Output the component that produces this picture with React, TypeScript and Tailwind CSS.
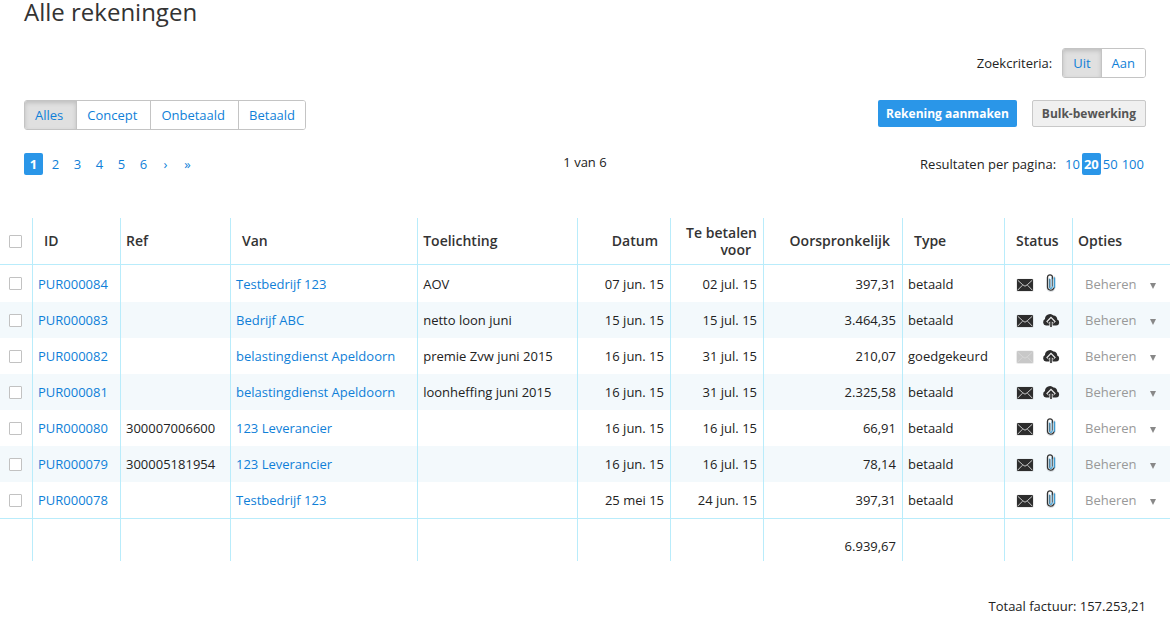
import React, { useState } from 'react';

type Attachment = 'clip' | 'upload';

interface Invoice {
  id: string;
  ref: string;
  from: string;
  note: string;
  date: string;
  due: string;
  amount: string;
  type: string;
  mailed: boolean;
  attachment: Attachment;
}

const filters = ['Alles', 'Concept', 'Onbetaald', 'Betaald'];
const searchModes = ['Uit', 'Aan'];
const pages = ['1', '2', '3', '4', '5', '6', '›', '»'];
const pageSizes = ['10', '20', '50', '100'];

const invoices: Invoice[] = [
  { id: 'PUR000084', ref: '', from: 'Testbedrijf 123', note: 'AOV', date: '07 jun. 15', due: '02 jul. 15', amount: '397,31', type: 'betaald', mailed: true, attachment: 'clip' },
  { id: 'PUR000083', ref: '', from: 'Bedrijf ABC', note: 'netto loon juni', date: '15 jun. 15', due: '15 jul. 15', amount: '3.464,35', type: 'betaald', mailed: true, attachment: 'upload' },
  { id: 'PUR000082', ref: '', from: 'belastingdienst Apeldoorn', note: 'premie Zvw juni 2015', date: '16 jun. 15', due: '31 jul. 15', amount: '210,07', type: 'goedgekeurd', mailed: false, attachment: 'upload' },
  { id: 'PUR000081', ref: '', from: 'belastingdienst Apeldoorn', note: 'loonheffing juni 2015', date: '16 jun. 15', due: '31 jul. 15', amount: '2.325,58', type: 'betaald', mailed: true, attachment: 'upload' },
  { id: 'PUR000080', ref: '300007006600', from: '123 Leverancier', note: '', date: '16 jun. 15', due: '16 jul. 15', amount: '66,91', type: 'betaald', mailed: true, attachment: 'clip' },
  { id: 'PUR000079', ref: '300005181954', from: '123 Leverancier', note: '', date: '16 jun. 15', due: '16 jul. 15', amount: '78,14', type: 'betaald', mailed: true, attachment: 'clip' },
  { id: 'PUR000078', ref: '', from: 'Testbedrijf 123', note: '', date: '25 mei 15', due: '24 jun. 15', amount: '397,31', type: 'betaald', mailed: true, attachment: 'clip' },
];

const MailIcon = ({ sent }: { sent: boolean }) => (
  <svg width="20" height="16" viewBox="0 -1 20 16" className={sent ? 'text-[#2d2d2d]' : 'text-[#c8c8c8]'} aria-hidden="true">
    <rect x="1" y="1.5" width="18" height="13.500" rx="2" fill="#000" opacity="0.08" />
    <rect x="2" y="2" width="16" height="12" rx="1" fill="currentColor" />
    <path d="M2.800 3.300l5 4.500L10 9.200l2.200-1.400 5-4.500M2.800 13l4.700-4.800M17.200 13l-4.700-4.800" fill="none" stroke="#d8d8d8" strokeWidth="0.9" />
  </svg>
);

const ClipIcon = () => (
  <svg width="12" height="20" viewBox="0 1 12 20" fill="none" strokeLinecap="round" aria-hidden="true">
    <path d="M2.500 5v9.500a3.300 3.300 0 0 0 6.600 0V4.500" stroke="#c9cfd3" strokeWidth="2.600" opacity="0.6" />
    <path d="M4.500 6v8a1.300 1.300 0 0 0 2.600 0V4.500" stroke="#3d9bd0" strokeWidth="1.200" />
    <path d="M9.500 5v9.500" stroke="#3d9bd0" strokeWidth="1.400" />
    <path d="M7.500 6V4.300a2.500 2.500 0 0 0-5 0v10a3.300 3.300 0 0 0 6.400 0.700" stroke="#333" strokeWidth="1.200" />
    <path d="M7.500 6v7M5 6.500v7.500" stroke="#666" strokeWidth="0.900" />
  </svg>
);

const UploadIcon = () => (
  <svg width="18" height="16" viewBox="0 -0.500 18 16" aria-hidden="true">
    <path d="M4 13A3.400 3.400 0 0 1 3 6.600 5 5 0 0 1 11.500 3a3.600 3.600 0 0 1 3.700 4 3.100 3.100 0 0 1-1 6z" fill="#2d2d2d" />
    <path d="M9 15V6.500M5.300 10L9 6.200l3.700 3.800" fill="none" stroke="#eee" strokeWidth="3.200" />
    <path d="M9 14.500V7M6 10L9 7l3 3" fill="none" stroke="#2d2d2d" strokeWidth="1.600" />
  </svg>
);

interface ButtonGroupProps {
  items: string[];
  active: string;
  buttonClass: string;
  onSelect: (item: string) => void;
}

const ButtonGroup: React.FC<ButtonGroupProps> = ({ items, active, buttonClass, onSelect }) => (
  <div className="flex h-[30px] divide-x divide-[#c4c4c4] overflow-hidden rounded-[3px] border border-[#c4c4c4]">
    {items.map(item => (
      <button
        key={item}
        type="button"
        onClick={() => onSelect(item)}
        className={`${buttonClass} text-[#0f7fd8] ${item === active ? 'bg-[#e0e0e0] shadow-[inset_0_2px_4px_rgba(0,0,0,0.15)]' : 'bg-white'}`}
      >
        {item}
      </button>
    ))}
  </div>
);

const checkboxClass = 'ml-[9px] block size-[13px] appearance-none rounded-[1px] border border-[#c2c2c2] bg-white checked:bg-[#2a96e8]';
const head = 'border-r border-b border-[#b9ecfb] font-semibold';
const cell = 'border-r border-[#b9ecfb] pl-[5px]';
const numberCell = 'border-r border-[#b9ecfb] pr-[6px] text-right';

const App: React.FC = () => {
  const [filter, setFilter] = useState('Alles');
  const [searchMode, setSearchMode] = useState('Uit');
  const [page, setPage] = useState('1');
  const [pageSize, setPageSize] = useState('20');
  const [selected, setSelected] = useState<string[]>([]);

  const toggle = (id: string) => {
    setSelected(prev => (prev.includes(id) ? prev.filter(s => s !== id) : [...prev, id]));
  };

  return (
    <main className="bg-white font-['Open_Sans',sans-serif] text-[13px] leading-[18px] text-[#222]">
      <div className="px-6">
        <h1 className="h-12 text-2xl leading-6 text-[#333]">Alle rekeningen</h1>

        <div className="flex items-center justify-end gap-[10px]">
          <span>Zoekcriteria:</span>
          <ButtonGroup items={searchModes} active={searchMode} buttonClass="px-[10px]" onSelect={setSearchMode} />
        </div>

        <div className="mt-[22px] flex items-start justify-between">
          <ButtonGroup items={filters} active={filter} buttonClass="pr-[13px] pl-[10px] last:pr-[10px]" onSelect={setFilter} />
          <div className="flex gap-[15px] text-xs font-bold">
            <button type="button" className="h-[27px] rounded-[2px] bg-[#2a96e8] px-2 text-white">Rekening aanmaken</button>
            <button type="button" className="h-[27px] rounded-[2px] border border-[#c8c8c8] bg-[#f0f0f0] px-[9px] text-[#555]">Bulk-bewerking</button>
          </div>
        </div>

        <div className="mt-[23px] grid grid-cols-3 items-center">
          <nav className="flex gap-[3px]">
            {pages.map(p => (
              <a
                key={p}
                href="#"
                onClick={() => setPage(p)}
                className={`w-[19px] rounded-[2px] py-[2px] text-center ${p === page ? 'bg-[#2a96e8] font-bold text-white' : 'text-[#0f7fd8]'}`}
              >
                {p}
              </a>
            ))}
          </nav>
          <span className="pb-1 text-center">1 van 6</span>
          <div className="flex items-center justify-end">
            <span className="mr-[7px]">Resultaten per pagina:</span>
            {pageSizes.map(size => (
              <a
                key={size}
                href="#"
                onClick={() => setPageSize(size)}
                className={`rounded-[2px] px-[2px] py-[2px] ${size === pageSize ? 'bg-[#2a96e8] font-bold text-white' : 'text-[#0f7fd8]'}`}
              >
                {size}
              </a>
            ))}
          </div>
        </div>
      </div>

      <table className="mt-[43px] w-full table-fixed border-separate border-spacing-0">
        <colgroup>
          <col className="w-[33px]" />
          <col className="w-[88px]" />
          <col className="w-[110px]" />
          <col className="w-[16%]" />
          <col />
          <col className="w-[93px]" />
          <col className="w-[93px]" />
          <col className="w-[139px]" />
          <col className="w-[102px]" />
          <col className="w-[68px]" />
          <col className="w-[97px]" />
        </colgroup>
        <thead>
          <tr className="h-[47px] text-left text-sm leading-[17px] text-[#333]">
            <th className={head}>
              <input type="checkbox" aria-label="Alles selecteren" className={checkboxClass} />
            </th>
            <th className={`${head} pb-[2px] pl-[11px]`}>ID</th>
            <th className={`${head} pb-[2px] pl-[5px]`}>Ref</th>
            <th className={`${head} pb-[2px] pl-[11px]`}>Van</th>
            <th className={`${head} pb-[2px] pl-[5px]`}>Toelichting</th>
            <th className={`${head} pr-3 pb-[2px] text-right`}>Datum</th>
            <th className={`${head} pr-[6px] text-right`}>
              Te betalen <span className="pr-[6px]">voor</span>
            </th>
            <th className={`${head} pr-3 pb-[2px] text-right`}>Oorspronkelijk</th>
            <th className={`${head} pb-[2px] pl-[11px]`}>Type</th>
            <th className={`${head} pb-[2px] pl-[11px]`}>Status</th>
            <th className="border-b border-[#b9ecfb] pb-[2px] pl-[5px] font-semibold">Opties</th>
          </tr>
        </thead>
        <tbody>
          {invoices.map(inv => (
            <tr key={inv.id} className="h-9 first:h-[37px] even:bg-[#f3f9fc]">
              <td className="border-r border-[#b9ecfb]">
                <input
                  type="checkbox"
                  aria-label={inv.id}
                  checked={selected.includes(inv.id)}
                  onChange={() => toggle(inv.id)}
                  className={checkboxClass}
                />
              </td>
              <td className={cell}><a href="#" className="text-[#0f7fd8]">{inv.id}</a></td>
              <td className={cell}>{inv.ref}</td>
              <td className={cell}><a href="#" className="text-[#0f7fd8]">{inv.from}</a></td>
              <td className={cell}>{inv.note}</td>
              <td className={numberCell}>{inv.date}</td>
              <td className={numberCell}>{inv.due}</td>
              <td className={numberCell}>{inv.amount}</td>
              <td className={cell}>{inv.type}</td>
              <td className={cell}>
                <div className="flex items-center pl-[5px]">
                  <MailIcon sent={inv.mailed} />
                  <span className="flex w-8 justify-center">
                    {inv.attachment === 'clip' ? <ClipIcon /> : <UploadIcon />}
                  </span>
                </div>
              </td>
              <td className="pr-[13px] pl-3">
                <button type="button" aria-haspopup="menu" className="flex w-full items-center justify-between text-[#999]">
                  Beheren
                  <svg width="8" height="8" viewBox="0 0 8 8" className="mt-1 text-[#888]" aria-hidden="true">
                    <path d="M1 1h6L4 7z" fill="currentColor" />
                  </svg>
                </button>
              </td>
            </tr>
          ))}
        </tbody>
        <tfoot>
          <tr className="h-[43px]">
            {Array.from({ length: 11 }, (_, i) => (
              <td key={i} className="border-t border-r border-[#b9ecfb] pt-3 pr-[6px] text-right last:border-r-0">
                {i === 7 ? '6.939,67' : ''}
              </td>
            ))}
          </tr>
        </tfoot>
      </table>

      <p className="mt-9 pr-6 pb-[17px] text-right">Totaal factuur: 157.253,21</p>
    </main>
  );
};

export default App;
